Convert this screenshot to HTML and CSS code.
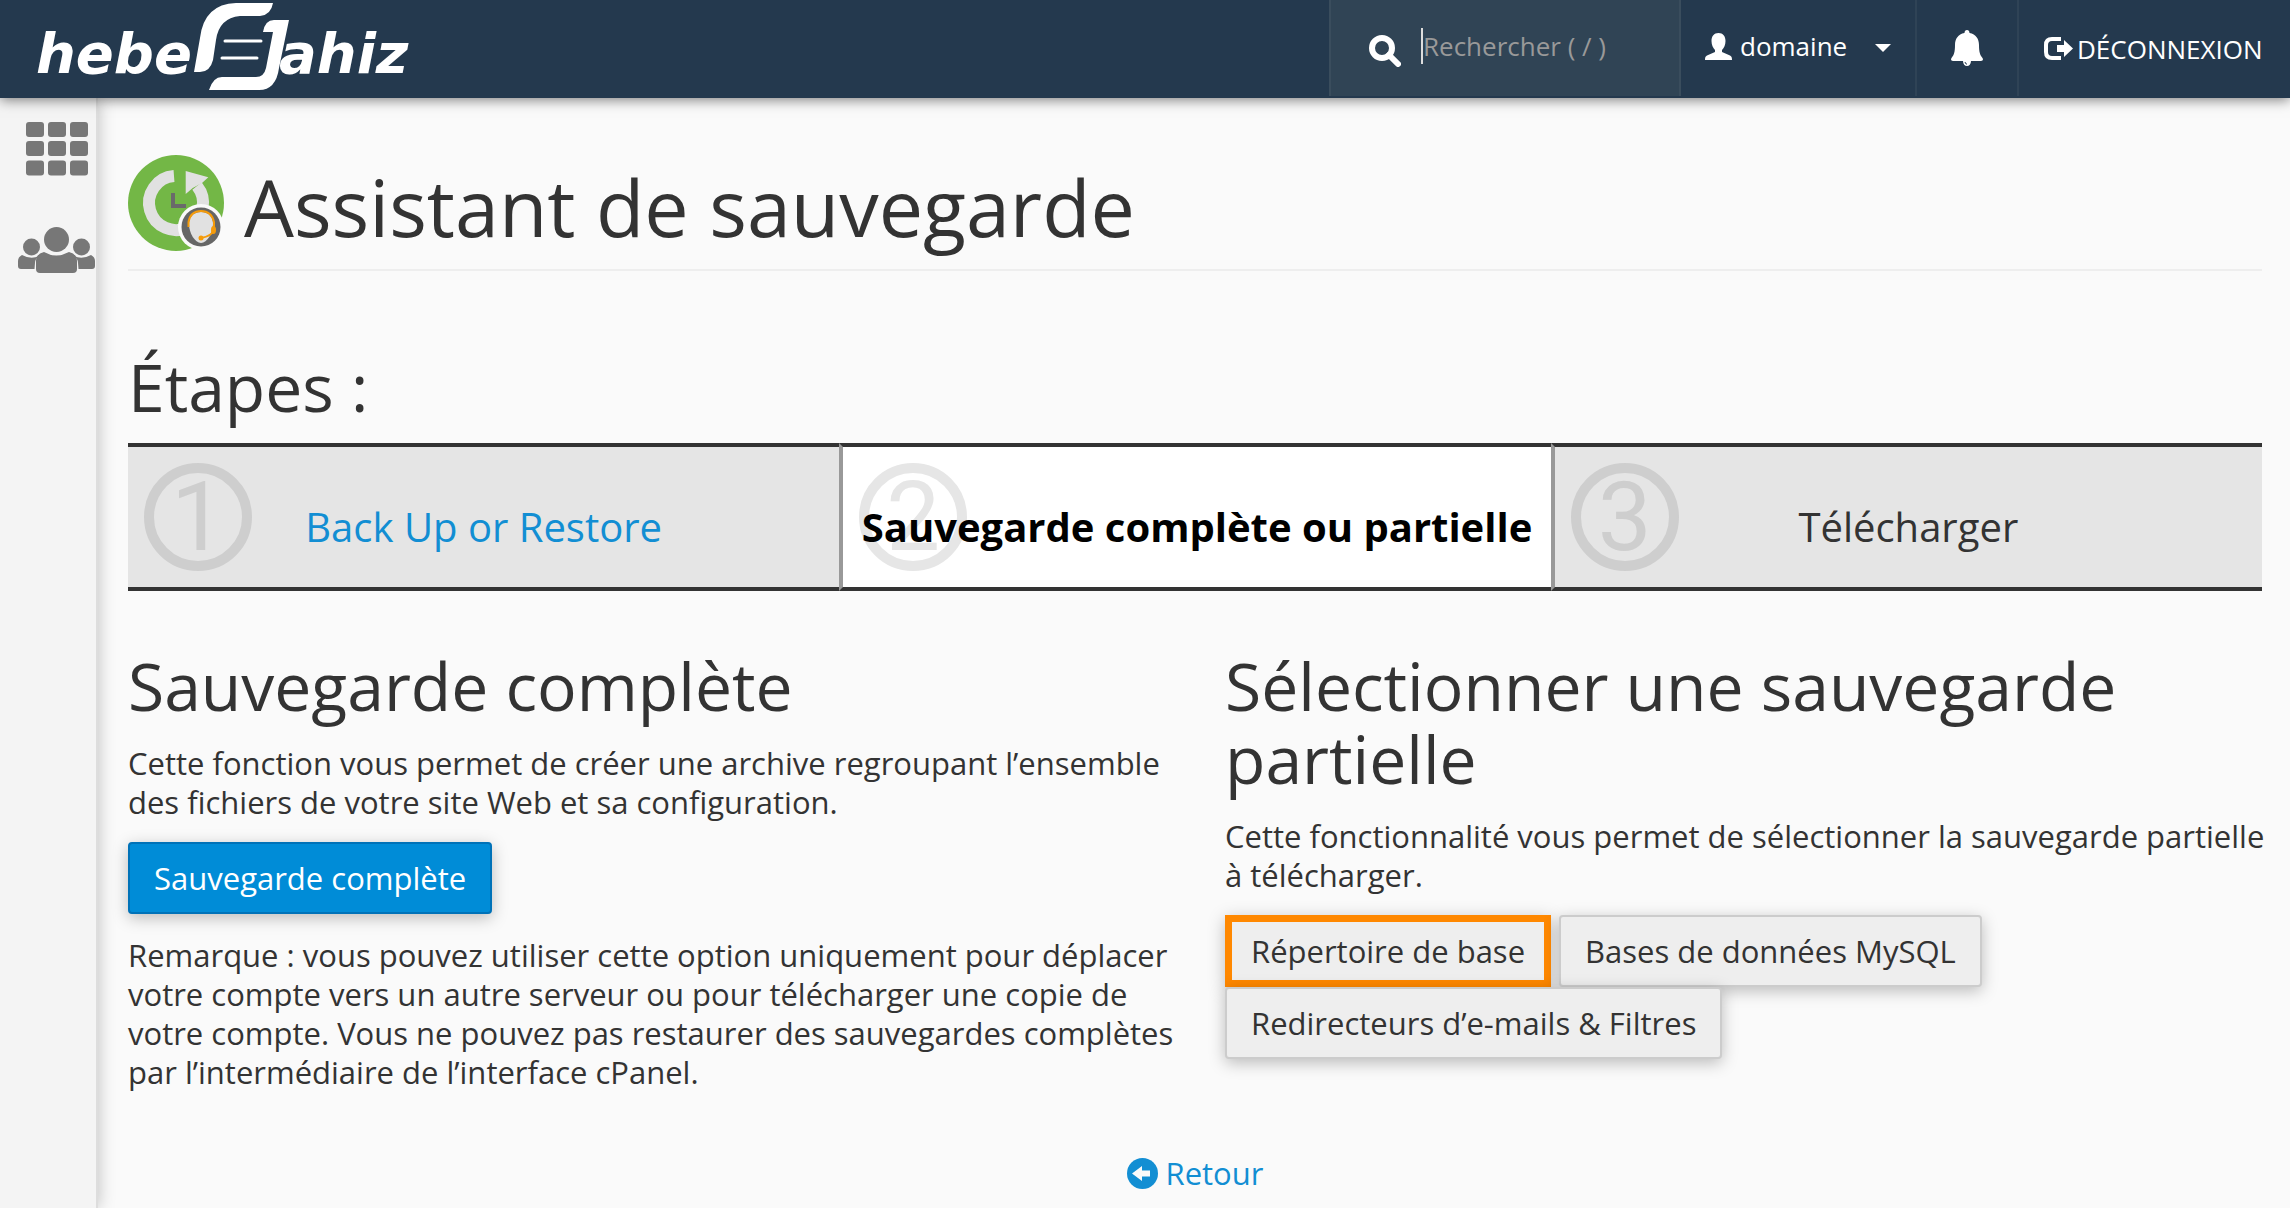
FILE: index.html
```html
<!DOCTYPE html>
<html lang="fr">
<head>
<meta charset="utf-8">
<title>Assistant de sauvegarde</title>
<link rel="stylesheet" href="styles.css">
</head>
<body>
<header class="topbar">
  <a class="brand" href="#" aria-label="heberJahiz">
    <svg class="brand-logo" width="440" height="98" viewBox="0 0 440 98">
      <g class="brand-text"><text x="36" y="73">hebe</text><text x="279" y="73">ahiz</text></g>
      <path fill="#fff" d="M194 72L200 38Q204 4 236 3H273Q271 15 260 16H240Q219 18 216 40L213 60Q210 72 200 72Z"/>
      <path fill="#fff" d="M263 32Q265 20 274 20H289L279 68Q276 90 259 90H209Q213 77 222 77H256Q264 77 266 68L273 32Z"/>
      <path stroke="#fff" stroke-width="3" stroke-linecap="round" d="M225 41H261M222 58H257"/>
    </svg>
  </a>
  <form class="search" role="search">
    <svg width="32" height="32" viewBox="0 0 32 32" fill="none" stroke="#fff"><circle cx="13" cy="13" r="10" stroke-width="6"/><path d="M20 20L29 29" stroke-width="6" stroke-linecap="round"/></svg>
    <span class="caret"></span>
    <input type="text" aria-label="Rechercher" placeholder="Rechercher ( / )">
  </form>
  <nav class="top-nav">
    <a class="nav-item user" href="#">
      <svg width="27" height="27" viewBox="0 0 27 27" fill="#fff"><path d="M13.500 0C18 0 20.500 3 20.500 8c0 4-1.500 7-3.500 9v2l8 3.500c1.500.8 2 2 2 4.500H0c0-2.500.5-3.700 2-4.500L10 19v-2C8 15 6.500 12 6.500 8 6.500 3 9 0 13.500 0z"/></svg>
      <span>domaine</span>
      <svg class="drop" width="16" height="8" viewBox="0 0 16 8" fill="#fff"><path d="M0 0h16l-8 8z"/></svg>
    </a>
    <a class="nav-item bell" href="#" aria-label="Notifications">
      <svg width="32" height="36" viewBox="0 0 32 36" fill="#fff"><path d="M16 0c1.500 0 2.500 1 2.500 3C25 4 28 9 28 15c0 7 1 10 3.500 13 1 1.500.3 3-1.500 3H20c0 3-1.800 5-4 5s-4-2-4-5H2c-1.800 0-2.500-1.500-1.500-3C3 25 4 22 4 15 4 9 7 4 13.500 3c0-2 1-3 2.500-3z"/><path d="M14 32q.3 2 2 2.200" fill="none" stroke="#24394e"/></svg>
    </a>
    <a class="nav-item logout" href="#">
      <svg width="30" height="26" viewBox="0 0 30 26"><path d="M18 3H9Q3 3 3 9v7q0 6 6 6h9" fill="none" stroke="#fff" stroke-width="4"/><path d="M14 9h7V4l9 8.500-9 8.500v-5h-7z" fill="#fff"/></svg>
      <span>DÉCONNEXION</span>
    </a>
  </nav>
</header>
<div class="shell">
  <aside class="sidebar">
    <a href="#" aria-label="Outils">
      <svg width="78" height="54" viewBox="0 0 78 54" fill="#777"><g id="r"><rect x="8" width="18" height="15" rx="3"/><rect x="30" width="18" height="15" rx="3"/><rect x="52" width="18" height="15" rx="3"/></g><use href="#r" y="19"/><use href="#r" y="38.500"/></svg>
    </a>
    <a href="#" aria-label="Utilisateurs">
      <svg width="78" height="46" viewBox="0 0 78 46" fill="#777"><circle cx="13.500" cy="20" r="8.500"/><circle cx="63.500" cy="20" r="8.500"/><path d="M4 28q9 5 17 1-4 3-4 7l-.5 6H3q-3 0-3-3v-5q0-4 4-6zM73 28q-9 5-17 1 4 3 4 7l.5 6H74q3 0 3-3v-5q0-4-4-6z"/><circle cx="38.500" cy="12.500" r="12.500"/><path d="M26 25q12 7 25 0 8 2 8 9v8q0 4-4 4H22q-4 0-4-4v-8q0-7 8-9z"/></svg>
    </a>
  </aside>
  <main class="content">
    <div class="page-title">
      <svg width="96" height="96" viewBox="0 0 96 96">
        <circle cx="48" cy="48" r="48" fill="#73b746"/>
        <path d="M46 21.100A27 27 0 1 0 69 31" fill="none" stroke="#e1e1e1" stroke-width="12"/>
        <path d="M57.700 16L80.300 22.300 74 28 64.700 33 57.700 39z" fill="#e1e1e1"/>
        <path d="M45 38v13h13" fill="none" stroke="#6a6a6a" stroke-width="4"/>
        <circle cx="73" cy="72" r="23" fill="#fafafa"/><circle cx="73" cy="72" r="19.500" fill="#666"/>
        <path d="M73 57c8 0 12 5 12 12 0 9-6 19-12 19s-12-10-12-19c0-7 4-12 12-12z" fill="#e1e1e1"/>
        <path d="M60.500 72v-5q2-11 12.500-11t13 11v8q-2 6-13 8" fill="none" stroke="#f59b0a" stroke-width="2"/>
        <circle cx="73" cy="83" r="2.500" fill="#f59b0a"/><ellipse cx="85.500" cy="75" rx="2.500" ry="4" fill="#f59b0a"/>
      </svg>
      <h1>Assistant de sauvegarde</h1>
    </div>
    <h2 class="steps-title">Étapes :</h2>
    <ol class="steps">
      <li class="step"><span class="num">1</span><a href="#">Back Up or Restore</a></li>
      <li class="step active"><span class="num">2</span><strong>Sauvegarde complète ou partielle</strong></li>
      <li class="step"><span class="num">3</span><span class="label">Télécharger</span></li>
    </ol>
    <div class="columns">
      <section>
        <h2>Sauvegarde complète</h2>
        <p>Cette fonction vous permet de créer une archive regroupant l’ensemble des fichiers de votre site Web et sa configuration.</p>
        <button class="btn primary" type="button">Sauvegarde complète</button>
        <p>Remarque : vous pouvez utiliser cette option uniquement pour déplacer votre compte vers un autre serveur ou pour télécharger une copie de votre compte. Vous ne pouvez pas restaurer des sauvegardes complètes par l’intermédiaire de l’interface cPanel.</p>
      </section>
      <section>
        <h2>Sélectionner une sauvegarde partielle</h2>
        <p>Cette fonctionnalité vous permet de sélectionner la sauvegarde partielle à télécharger.</p>
        <div class="actions">
          <button class="btn marked" type="button">Répertoire de base</button>
          <button class="btn" type="button">Bases de données MySQL</button>
          <button class="btn" type="button">Redirecteurs d’e-mails &amp; Filtres</button>
        </div>
      </section>
    </div>
    <a class="back" href="#">
      <svg width="31" height="31" viewBox="0 0 31 31"><circle cx="15.500" cy="15.500" r="15.500" fill="#128ed3"/><path d="M5 15.500L15 8v4.500h8v6h-8V23z" fill="#fafafa"/></svg>
      <span>Retour</span>
    </a>
  </main>
</div>
</body>
</html>
```
FILE: styles.css
```css
* { box-sizing: border-box; }
body {
  margin: 0;
  min-height: 100vh;
  display: flex;
  flex-direction: column;
  background: #fafafa;
  color: #333;
  font: 31px/40px "Open Sans", "Noto Sans", sans-serif;
}
a { color: #128ed3; text-decoration: none; }
svg { display: block; flex: none; }
h1, h2, p { margin: 0; font-weight: 400; }
h1 { font-size: 79px; line-height: 88px; }
h2 { font-size: 66px; line-height: 73px; }

.topbar {
  position: relative;
  z-index: 2;
  display: flex;
  height: 98px;
  padding-bottom: 2px;
  background: #24394e;
  box-shadow: 0 2px 12px rgba(0, 0, 0, .5);
  font-size: 26px;
  line-height: 36px;
}
.brand { margin-right: auto; }
.brand-text { fill: #fff; font: italic 700 56px "DejaVu Sans", sans-serif; }
.search {
  display: flex;
  align-items: center;
  width: 352px;
  padding-left: 38px;
  background: #304455;
  border: solid #3a4d5d;
  border-width: 0 2px;
}
.search svg { margin-top: 6px; }
.caret { width: 2px; height: 36px; margin: 0 0 4px 20px; background: #ddd; }
.search input {
  flex: 1;
  min-width: 0;
  margin-bottom: 4px;
  padding: 0;
  border: 0;
  outline: 0;
  background: none;
  color: #fff;
  font: inherit;
}
.search input::placeholder { color: #999; opacity: 1; }
.top-nav { display: flex; }
.nav-item {
  display: flex;
  align-items: center;
  color: #fff;
  font-weight: 500;
  border-right: 2px solid #2f4356;
}
.user { width: 236px; padding: 0 24px 4px; gap: 8px; }
.user .drop { margin: 4px 0 0 auto; }
.bell { width: 102px; justify-content: center; }
.logout { width: 271px; padding: 2px 0 0 24px; gap: 4px; border: 0; }

.shell { display: flex; flex: 1; }
.sidebar {
  display: flex;
  flex-direction: column;
  gap: 51px;
  width: 98px;
  padding: 24px 0 0 18px;
  background: #f4f4f4;
  border-right: 2px solid #ddd;
  box-shadow: 0 0 16px rgba(0, 0, 0, .25);
}
.content { flex: 1; padding: 57px 28px 0 30px; }
.page-title {
  display: flex;
  align-items: flex-end;
  gap: 20px;
  padding-bottom: 18px;
  border-bottom: 2px solid #eee;
}
.steps-title { margin: 79px 0 20px; }
.steps {
  display: grid;
  grid-template-columns: repeat(3, 1fr);
  margin: 0;
  padding: 0;
  list-style: none;
  font-size: 40px;
  line-height: 56px;
}
.step {
  position: relative;
  height: 148px;
  padding-top: 52px;
  text-align: center;
  background: #e5e5e5;
  border: solid #333;
  border-width: 4px 0;
}
.step + .step { border-left: 4px solid #999; }
.step.active { background: #fff; color: #000; }
.step a, .step strong, .step .label { position: relative; }
.num {
  position: absolute;
  left: 16px;
  top: 16px;
  width: 108px;
  height: 108px;
  border: 10px solid #cecece;
  border-radius: 50%;
  color: #cecece;
  font: 96px/88px Roboto, sans-serif;
}
.active .num { color: #e6e6e6; border-color: #e6e6e6; }

.columns {
  display: grid;
  grid-template-columns: 1fr 1fr;
  gap: 60px;
  margin-top: 58px;
}
.columns p { margin: 22px -16px 20px 0; line-height: 39px; }
.btn {
  height: 72px;
  padding: 0 24px;
  border: 2px solid #ccc;
  border-radius: 4px;
  background: #eee;
  color: #333;
  font: inherit;
  box-shadow: 0 4px 16px rgba(0, 0, 0, .25);
}
.btn.primary { background: #008cd7; border-color: #0072b8; color: #fff; }
.btn.marked { border: 7px solid #ff8800; border-radius: 0; padding: 0 19px; }
.actions { display: flex; flex-wrap: wrap; column-gap: 8px; }
.columns .btn { display: block; }
.back {
  display: flex;
  justify-content: center;
  align-items: center;
  gap: 8px;
  margin-top: 41px;
}
```
